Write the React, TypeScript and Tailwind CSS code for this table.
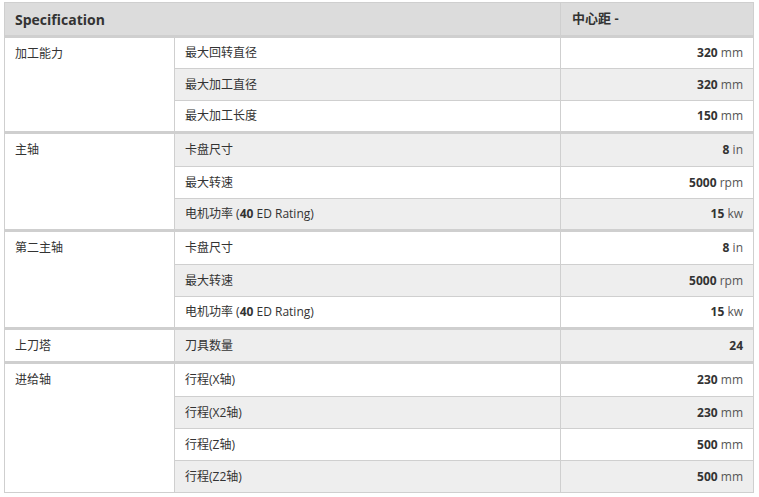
import React from "react"

type Row = { label: string; bold?: string; suffix?: string; value: string; unit?: string }
type Group = { name: string; rows: Row[] }

const groups: Group[] = [
  {
    name: "加工能力",
    rows: [
      { label: "最大回转直径", value: "320", unit: "mm" },
      { label: "最大加工直径", value: "320", unit: "mm" },
      { label: "最大加工长度", value: "150", unit: "mm" },
    ],
  },
  {
    name: "主轴",
    rows: [
      { label: "卡盘尺寸", value: "8", unit: "in" },
      { label: "最大转速", value: "5000", unit: "rpm" },
      { label: "电机功率 (", bold: "40", suffix: " ED Rating)", value: "15", unit: "kw" },
    ],
  },
  {
    name: "第二主轴",
    rows: [
      { label: "卡盘尺寸", value: "8", unit: "in" },
      { label: "最大转速", value: "5000", unit: "rpm" },
      { label: "电机功率 (", bold: "40", suffix: " ED Rating)", value: "15", unit: "kw" },
    ],
  },
  {
    name: "上刀塔",
    rows: [{ label: "刀具数量", value: "24" }],
  },
  {
    name: "进给轴",
    rows: [
      { label: "行程(X轴)", value: "230", unit: "mm" },
      { label: "行程(X2轴)", value: "230", unit: "mm" },
      { label: "行程(Z轴)", value: "500", unit: "mm" },
      { label: "行程(Z2轴)", value: "500", unit: "mm" },
    ],
  },
]

export default function App() {
  let idx = 0
  return (
    <div
      className="min-h-[497px] bg-white pt-[2px] pl-[4px] text-[#333] text-[12px]"
      style={{ fontFamily: '"Open Sans", "Noto Sans CJK SC", sans-serif' }}
    >
      <table className="w-[750px] border-collapse table-fixed">
        <colgroup>
          <col className="w-[170px]" />
          <col className="w-[386px]" />
          <col />
        </colgroup>
        <thead>
          <tr className="bg-[#dcdcdc] h-[34px]">
            <th
              colSpan={2}
              className="border border-[#cfcfcf] border-b-[3px] px-[10px] text-left text-[14px] font-bold text-[#333]"
            >
              Specification
            </th>
            <th className="border border-[#cfcfcf] border-b-[3px] px-[11px] text-left text-[13px] font-bold text-[#333]">
              中心距 -
            </th>
          </tr>
        </thead>
        {groups.map((g, gi) => (
          <tbody key={g.name}>
            {g.rows.map((r, ri) => {
              const striped = idx++ % 2 === 1
              const first = ri === 0 && gi > 0
              const top = first ? "border-t-[3px]" : ""
              return (
                <tr
                  key={ri}
                  className={`${first ? "h-[34px]" : "h-[32px]"} ${striped ? "bg-[#eeeeee]" : "bg-white"}`}
                >
                  {ri === 0 && (
                    <td
                      rowSpan={g.rows.length}
                      className={`border border-[#cfcfcf] ${top} bg-white px-[10px] pt-[7px] align-top`}
                    >
                      {g.name}
                    </td>
                  )}
                  <td className={`border border-[#cfcfcf] ${top} px-[10px]`}>
                    {r.label}
                    {r.bold && <b className="font-bold">{r.bold}</b>}
                    {r.suffix}
                  </td>
                  <td className={`border border-[#cfcfcf] ${top} px-[10px] text-right`}>
                    <b className="font-bold">{r.value}</b>
                    {r.unit && <span className="text-[#555]"> {r.unit}</span>}
                  </td>
                </tr>
              )
            })}
          </tbody>
        ))}
      </table>
    </div>
  )
}
